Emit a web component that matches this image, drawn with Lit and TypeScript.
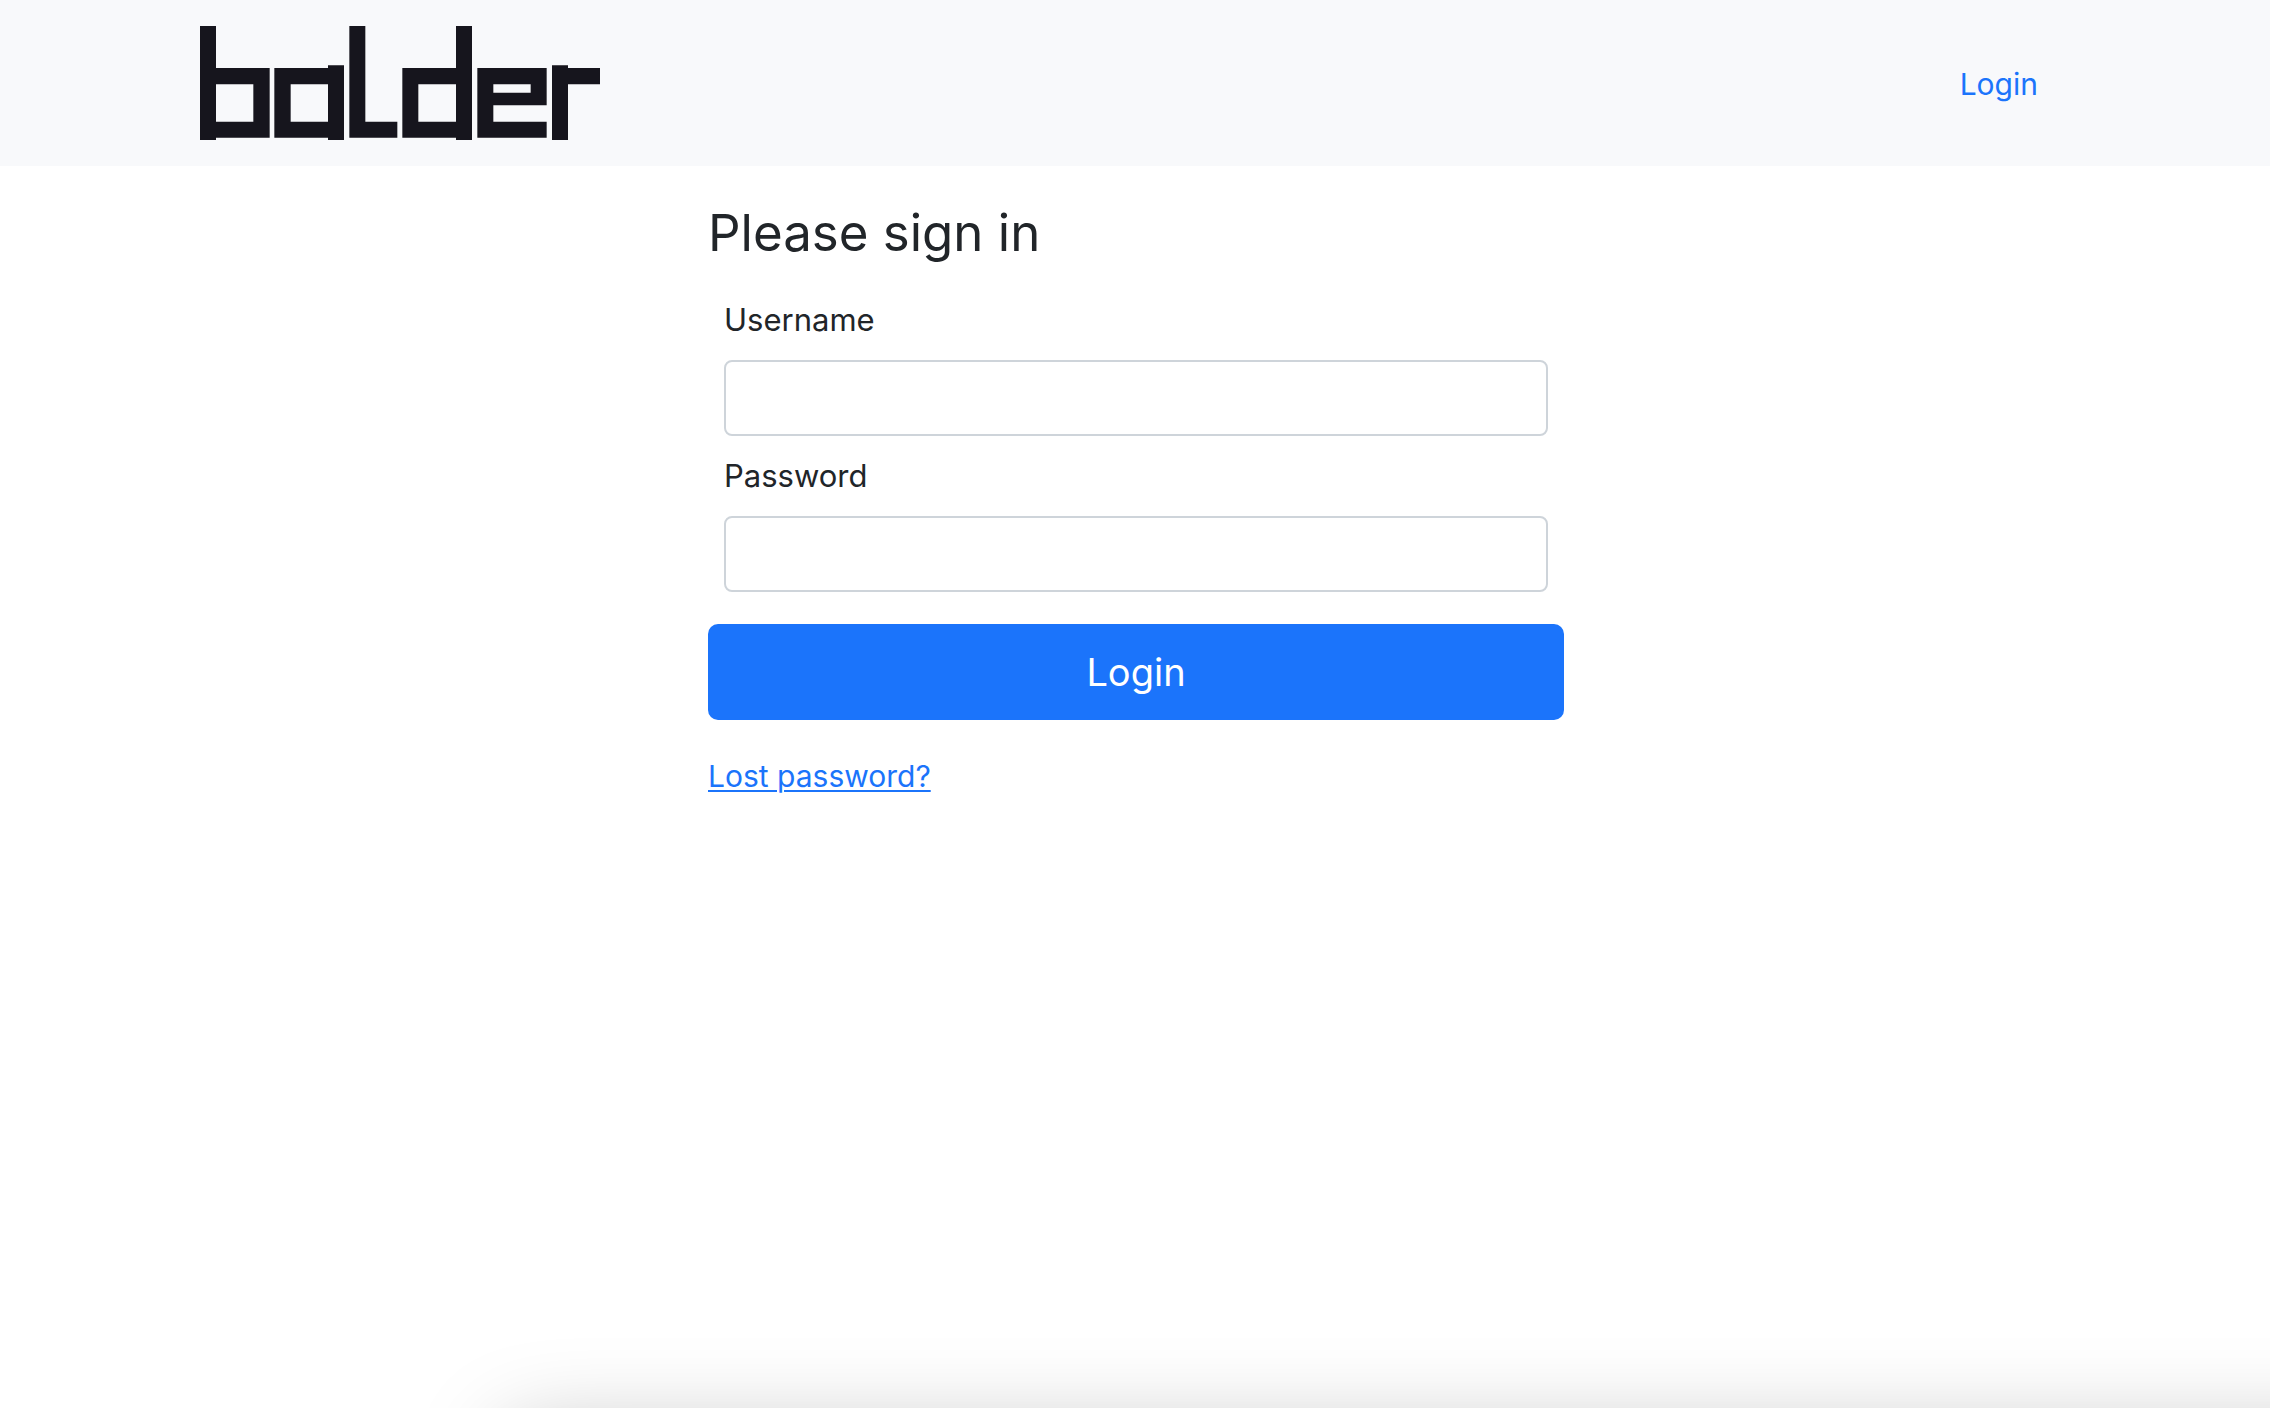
import { LitElement, html, css } from "lit";
import { customElement } from "lit/decorators.js";

@customElement("site-header")
class SiteHeader extends LitElement {
  static styles = css`
    :host {
      display: block;
      background: #f8f9fb;
    }
    .bar {
      box-sizing: border-box;
      max-width: 1918px;
      margin: 0 auto;
      padding: 26px 24px;
      display: flex;
      align-items: center;
      justify-content: space-between;
    }
    .brand,
    .logo {
      display: block;
    }
    .logo {
      width: 400px;
      height: 114px;
      fill: #16151d;
    }
    .nav-link {
      padding: 18px 32px 16px;
      color: #1b74fb;
      font-size: 30px;
      line-height: 48px;
      text-decoration: none;
    }
  `;

  render() {
    return html`
      <nav class="bar">
        <a class="brand" href="#" aria-label="balder">
          <svg class="logo" viewBox="0 0 1200 342" aria-hidden="true">
            <path fill-rule="evenodd" d="M0 0H48V126H209V335H48V342H0ZM48 175V287H160V175Z" />
            <path fill-rule="evenodd" d="M223 126H384V118H432V342H384V335H223ZM272 175V287H384V175Z" />
            <path d="M448 0H496V287H592V335H448Z" />
            <path fill-rule="evenodd" d="M607 126H768V0H816V342H768V335H607ZM655 175V287H768V175Z" />
            <path fill-rule="evenodd" d="M832 126H1040V238H880V287H1040V335H832ZM880 175V200H992V175Z" />
            <path d="M1056 118H1104V126H1200V175H1104V342H1056Z" />
          </svg>
        </a>
        <a class="nav-link" href="#login">Login</a>
      </nav>
    `;
  }
}

@customElement("login-form")
class LoginForm extends LitElement {
  static styles = css`
    :host {
      display: block;
    }
    .form {
      box-sizing: border-box;
      max-width: 856px;
      margin: 0 auto;
      display: flex;
      flex-direction: column;
    }
    .title {
      margin: 0 0 14px;
      font-size: 51px;
      font-weight: 400;
      line-height: 66px;
    }
    .field {
      display: flex;
      flex-direction: column;
      gap: 16px;
      padding: 16px 16px 0;
    }
    .label {
      font-size: 31px;
      line-height: 48px;
    }
    .input {
      box-sizing: border-box;
      width: 100%;
      height: 76px;
      padding: 12px 24px;
      border: 2px solid #ced4da;
      border-radius: 8px;
      background: #fff;
      color: inherit;
      font: inherit;
      font-size: 31px;
    }
    .submit {
      margin: 32px 0;
      padding: 16px 32px;
      height: 96px;
      border: 0;
      border-radius: 10px;
      background: #1b74fb;
      color: #fff;
      font: inherit;
      font-size: 38px;
      line-height: 60px;
    }
    .lost {
      align-self: flex-start;
      color: #1b74fb;
      font-size: 30px;
      line-height: 48px;
      text-underline-offset: 3px;
      text-decoration-thickness: 2px;
    }
  `;

  render() {
    return html`
      <form class="form" @submit=${(e: Event) => e.preventDefault()}>
        <h1 class="title">Please sign in</h1>
        <div class="field">
          <label class="label" for="username">Username</label>
          <input class="input" id="username" type="text" autocomplete="username" />
        </div>
        <div class="field">
          <label class="label" for="password">Password</label>
          <input class="input" id="password" type="password" autocomplete="current-password" />
        </div>
        <button class="submit" type="submit">Login</button>
        <a class="lost" href="#lost">Lost password?</a>
      </form>
    `;
  }
}

@customElement("app-root")
class AppRoot extends LitElement {
  static styles = css`
    :host {
      display: block;
      position: relative;
      min-height: 100vh;
      overflow: hidden;
      background: #fff;
      color: #212529;
      font-family: Inter, "Liberation Sans", sans-serif;
    }
    .content {
      padding: 34px 24px 32px 26px;
    }
    /* Soft shadow rising from below the bottom edge of the page. */
    .shade {
      position: absolute;
      top: 100%;
      left: 504px;
      right: -200px;
      height: 400px;
      margin-top: 24px;
      border-radius: 24px;
      box-shadow: 0 0 90px rgba(0, 0, 0, 0.26);
      pointer-events: none;
    }
  `;

  render() {
    return html`
      <site-header></site-header>
      <main class="content"><login-form></login-form></main>
      <div class="shade"></div>
    `;
  }
}
